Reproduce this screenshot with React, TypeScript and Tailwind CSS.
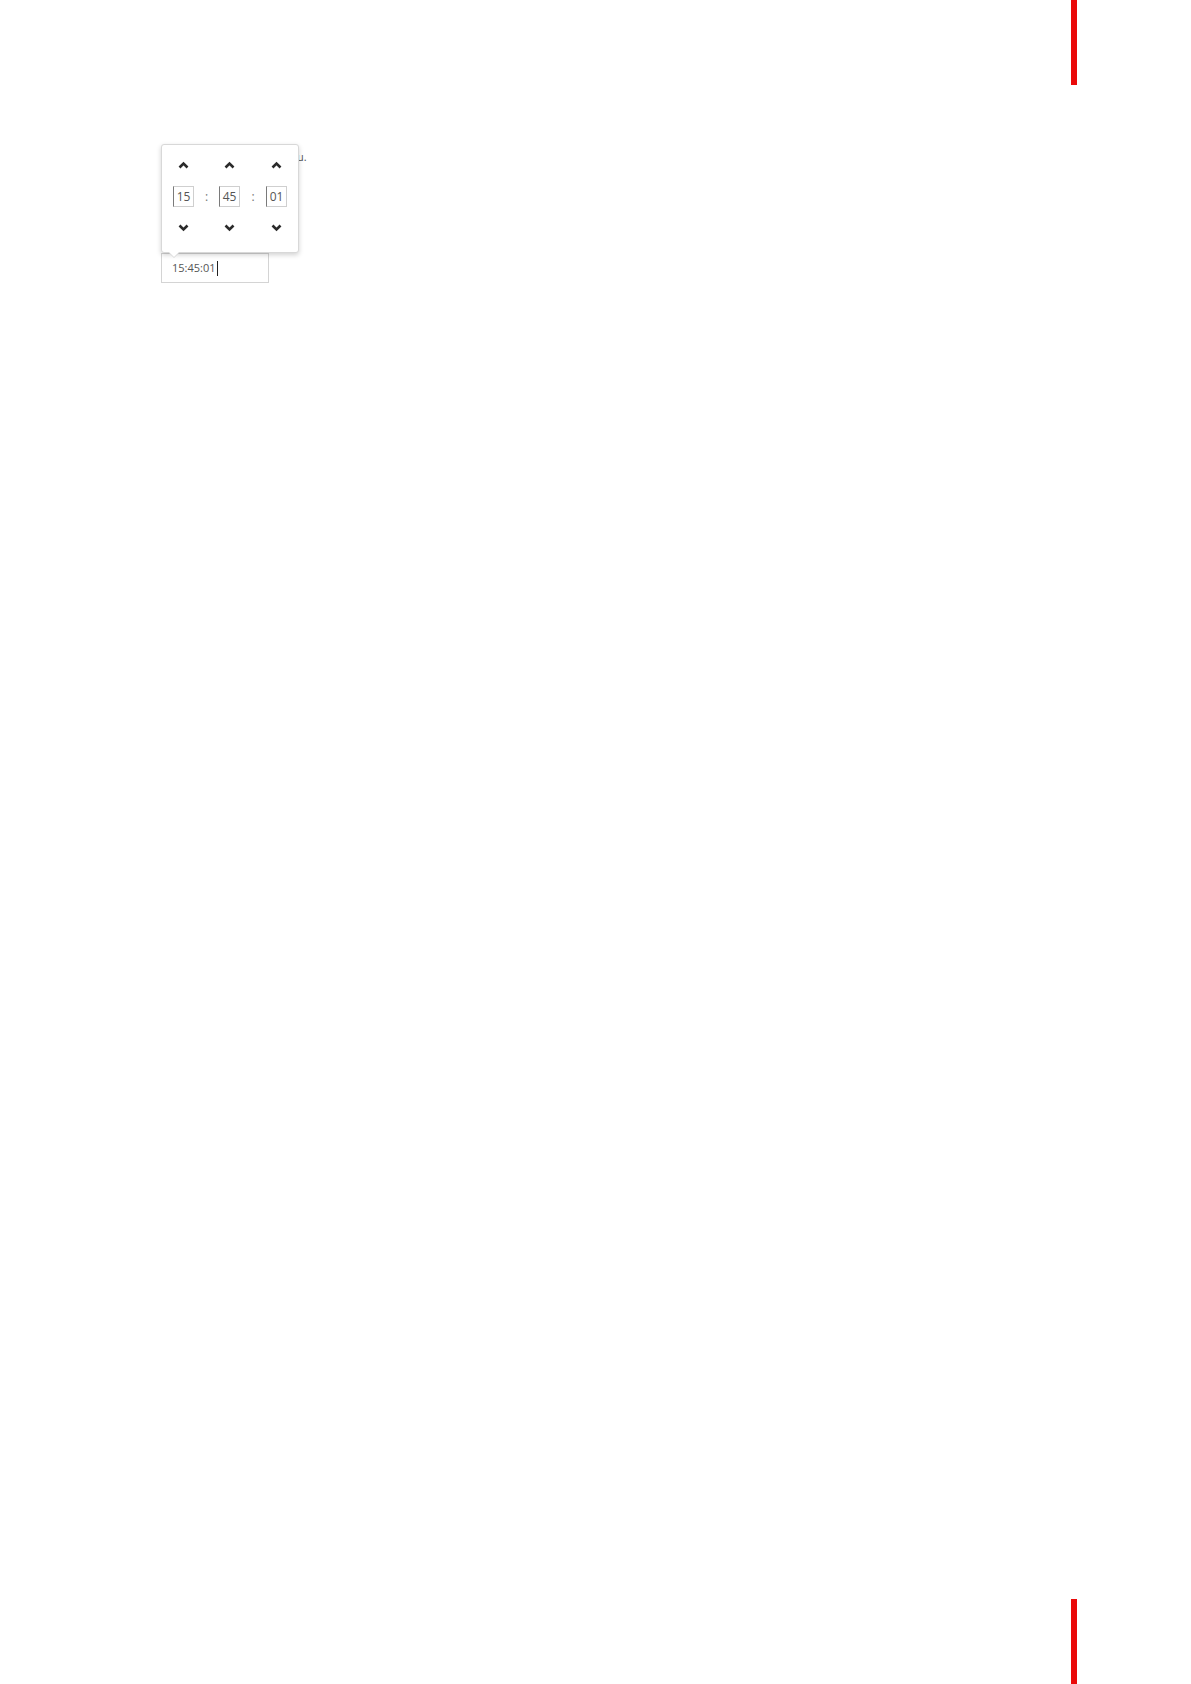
import React from "react";

const Up = () => (
  <svg width="11" height="8" viewBox="0 0 11 8" className="block">
    <polyline points="1.5,6.5 5.5,2.5 9.5,6.5" fill="none" stroke="#2b2b2b" strokeWidth="2.6" />
  </svg>
);
const Down = () => (
  <svg width="11" height="8" viewBox="0 0 11 8" className="block">
    <polyline points="1.5,1.5 5.5,5.5 9.5,1.5" fill="none" stroke="#2b2b2b" strokeWidth="2.6" />
  </svg>
);

const Box = ({ v }: { v: string }) => (
  <div className="w-[21px] h-[21px] border border-[#cfcfcf] border-l-[#7a7a7a] flex items-center justify-center text-[12px] text-[#555] leading-none">
    {v}
  </div>
);

export default function App() {
  return (
    <div
      className="w-[1191px] h-[1684px] bg-white flex flex-col"
      style={{ fontFamily: '"Open Sans", "Noto Sans", sans-serif' }}
    >
      <div className="ml-[1071px] w-[6px] h-[85px] bg-[#ea0a0a]" />
      <div className="ml-[161px] mt-[59px] relative w-[160px]">
        <p className="pl-[136px] pt-[6px] text-[11px] leading-[14px] text-[#555]">u.</p>
        <div className="mt-[89px] w-[108px] h-[30px] border border-[#d4d4d4] flex items-center pl-[10px] text-[11px] text-[#555]">
          <span>15:45:01</span>
          <span className="ml-px w-px h-[15px] bg-[#222]" />
        </div>
        <div className="absolute left-0 top-0 w-[138px] h-[109px] bg-white border border-[#d8d8d8] rounded-[3px] shadow-[0_2px_5px_rgba(0,0,0,0.18)]">
          <div className="flex flex-col pl-[11px] pt-[16px]">
            <div className="flex items-center h-[8px]">
              <div className="w-[21px] flex justify-center"><Up /></div>
              <div className="w-[25px]" />
              <div className="w-[21px] flex justify-center"><Up /></div>
              <div className="w-[26px]" />
              <div className="w-[21px] flex justify-center"><Up /></div>
            </div>
            <div className="flex items-center mt-[17px]">
              <Box v="15" />
              <div className="w-[25px] text-center text-[12px] text-[#777] leading-none">:</div>
              <Box v="45" />
              <div className="w-[26px] text-center text-[12px] text-[#777] leading-none">:</div>
              <Box v="01" />
            </div>
            <div className="flex items-center h-[8px] mt-[17px]">
              <div className="w-[21px] flex justify-center"><Down /></div>
              <div className="w-[25px]" />
              <div className="w-[21px] flex justify-center"><Down /></div>
              <div className="w-[26px]" />
              <div className="w-[21px] flex justify-center"><Down /></div>
            </div>
          </div>
          <div className="absolute left-[6px] bottom-[-6px] w-0 h-0 border-l-[6px] border-r-[6px] border-t-[6px] border-l-transparent border-r-transparent border-t-[#d8d8d8]" />
          <div className="absolute left-[7px] bottom-[-5px] w-0 h-0 border-l-[5px] border-r-[5px] border-t-[5px] border-l-transparent border-r-transparent border-t-white" />
        </div>
      </div>
      <div className="mt-auto ml-[1071px] w-[6px] h-[85px] bg-[#ea0a0a]" />
    </div>
  );
}
